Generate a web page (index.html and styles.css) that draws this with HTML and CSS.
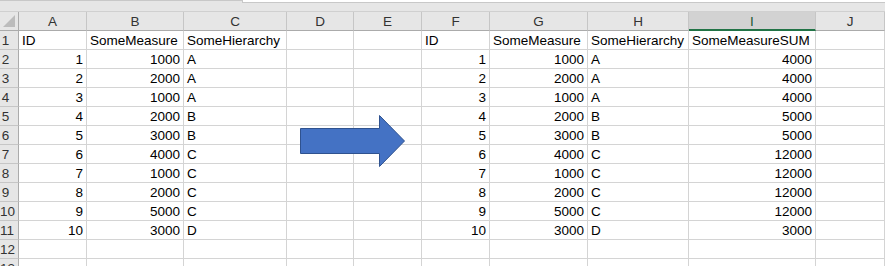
FILE: index.html
```html
<!DOCTYPE html>
<html>
<head>
<meta charset="utf-8">
<link rel="stylesheet" href="styles.css">
</head>
<body>
<div class="sheet">
  <div class="toolbar"><div class="toolbar-box"></div></div>
  <div class="grid">
    <div class="hd corner"><span class="tri"></span></div>
    <div class="hd col">A</div><div class="hd col">B</div><div class="hd col">C</div><div class="hd col">D</div><div class="hd col">E</div><div class="hd col">F</div><div class="hd col">G</div><div class="hd col">H</div><div class="hd col sel">I</div><div class="hd col">J</div>

    <div class="hd row">1</div><div class="c">ID</div><div class="c">SomeMeasure</div><div class="c">SomeHierarchy</div><div class="c"></div><div class="c"></div><div class="c">ID</div><div class="c">SomeMeasure</div><div class="c">SomeHierarchy</div><div class="c">SomeMeasureSUM</div><div class="c"></div>
    <div class="hd row">2</div><div class="c n">1</div><div class="c n">1000</div><div class="c">A</div><div class="c"></div><div class="c"></div><div class="c n">1</div><div class="c n">1000</div><div class="c">A</div><div class="c n">4000</div><div class="c"></div>
    <div class="hd row">3</div><div class="c n">2</div><div class="c n">2000</div><div class="c">A</div><div class="c"></div><div class="c"></div><div class="c n">2</div><div class="c n">2000</div><div class="c">A</div><div class="c n">4000</div><div class="c"></div>
    <div class="hd row">4</div><div class="c n">3</div><div class="c n">1000</div><div class="c">A</div><div class="c"></div><div class="c"></div><div class="c n">3</div><div class="c n">1000</div><div class="c">A</div><div class="c n">4000</div><div class="c"></div>
    <div class="hd row">5</div><div class="c n">4</div><div class="c n">2000</div><div class="c">B</div><div class="c"></div><div class="c"></div><div class="c n">4</div><div class="c n">2000</div><div class="c">B</div><div class="c n">5000</div><div class="c"></div>
    <div class="hd row">6</div><div class="c n">5</div><div class="c n">3000</div><div class="c">B</div><div class="c"></div><div class="c"></div><div class="c n">5</div><div class="c n">3000</div><div class="c">B</div><div class="c n">5000</div><div class="c"></div>
    <div class="hd row">7</div><div class="c n">6</div><div class="c n">4000</div><div class="c">C</div><div class="c"></div><div class="c"></div><div class="c n">6</div><div class="c n">4000</div><div class="c">C</div><div class="c n">12000</div><div class="c"></div>
    <div class="hd row">8</div><div class="c n">7</div><div class="c n">1000</div><div class="c">C</div><div class="c"></div><div class="c"></div><div class="c n">7</div><div class="c n">1000</div><div class="c">C</div><div class="c n">12000</div><div class="c"></div>
    <div class="hd row">9</div><div class="c n">8</div><div class="c n">2000</div><div class="c">C</div><div class="c"></div><div class="c"></div><div class="c n">8</div><div class="c n">2000</div><div class="c">C</div><div class="c n">12000</div><div class="c"></div>
    <div class="hd row">10</div><div class="c n">9</div><div class="c n">5000</div><div class="c">C</div><div class="c"></div><div class="c"></div><div class="c n">9</div><div class="c n">5000</div><div class="c">C</div><div class="c n">12000</div><div class="c"></div>
    <div class="hd row">11</div><div class="c n">10</div><div class="c n">3000</div><div class="c">D</div><div class="c"></div><div class="c"></div><div class="c n">10</div><div class="c n">3000</div><div class="c">D</div><div class="c n">3000</div><div class="c"></div>
    <div class="hd row">12</div><div class="c"></div><div class="c"></div><div class="c"></div><div class="c"></div><div class="c"></div><div class="c"></div><div class="c"></div><div class="c"></div><div class="c"></div><div class="c"></div>
    <div class="hd row">13</div><div class="c"></div><div class="c"></div><div class="c"></div><div class="c"></div><div class="c"></div><div class="c"></div><div class="c"></div><div class="c"></div><div class="c"></div><div class="c"></div>
  </div>

  <!-- block arrow shape floating over the cells -->
  <svg class="arrow" width="106" height="53" viewBox="0 0 106 53">
    <path d="M0.5 13.5 H79.5 V0.5 L104.5 26 L79.5 51.5 V38.5 H0.5 Z" fill="#4472c4" stroke="#2f528f" stroke-width="1"/>
  </svg>
</div>
</body>
</html>
```
FILE: styles.css
```css
html, body {
  margin: 0;
  padding: 0;
  background: #ffffff;
  overflow: hidden;
}

.sheet {
  position: relative;
  width: 885px;
  height: 266px;
  overflow: hidden;
  font-family: "Liberation Sans", Arial, sans-serif;
  font-size: 13.5px;
  color: #000;
}

.toolbar {
  height: 12px;
  box-sizing: border-box;
  background: #e6e6e6;
  border-top: 1px solid #c8c8c8;
  border-bottom: 1px solid #d0d0d0;
  display: flex;
  justify-content: flex-end;
}

.toolbar-box {
  width: 642px;
  height: 2px;
  margin-top: -1px;
  background: #ffffff;
  border-left: 1px solid #c8c8c8;
  border-bottom: 1px solid #c8c8c8;
}

.grid {
  display: grid;
  grid-template-columns: 19px 68px 97px 103px 67px 68px 68px 98px 101px 127px 1fr;
  grid-auto-rows: 19px;
}

.grid > div {
  box-sizing: border-box;
  border-right: 1px solid #d4d4d4;
  border-bottom: 1px solid #d4d4d4;
  line-height: 19px;
  white-space: nowrap;
  overflow: hidden;
}

.c {
  padding: 0 2px 0 3px;
}

.c.n {
  text-align: right;
  padding-right: 3px;
}

.hd {
  background: #e6e6e6;
  color: #333;
}

.grid > .hd.col {
  text-align: center;
  border-right-color: #c6c6c6;
  border-bottom-color: #ababab;
}

.grid > .hd.sel {
  background: #d2d2d2;
  color: #1d5a36;
  border-bottom: 2px solid #217346;
}

.grid > .hd.row {
  text-align: center;
  padding-right: 7px;
  border-right-color: #ababab;
  border-bottom-color: #c6c6c6;
}

.grid > .corner {
  position: relative;
  border-right-color: #ababab;
  border-bottom-color: #ababab;
}

.tri {
  position: absolute;
  right: 3px;
  bottom: 3px;
  width: 0;
  height: 0;
  border-left: 12px solid transparent;
  border-bottom: 12px solid #bcbcbc;
}

.arrow {
  position: absolute;
  left: 300px;
  top: 115px;
}
```
